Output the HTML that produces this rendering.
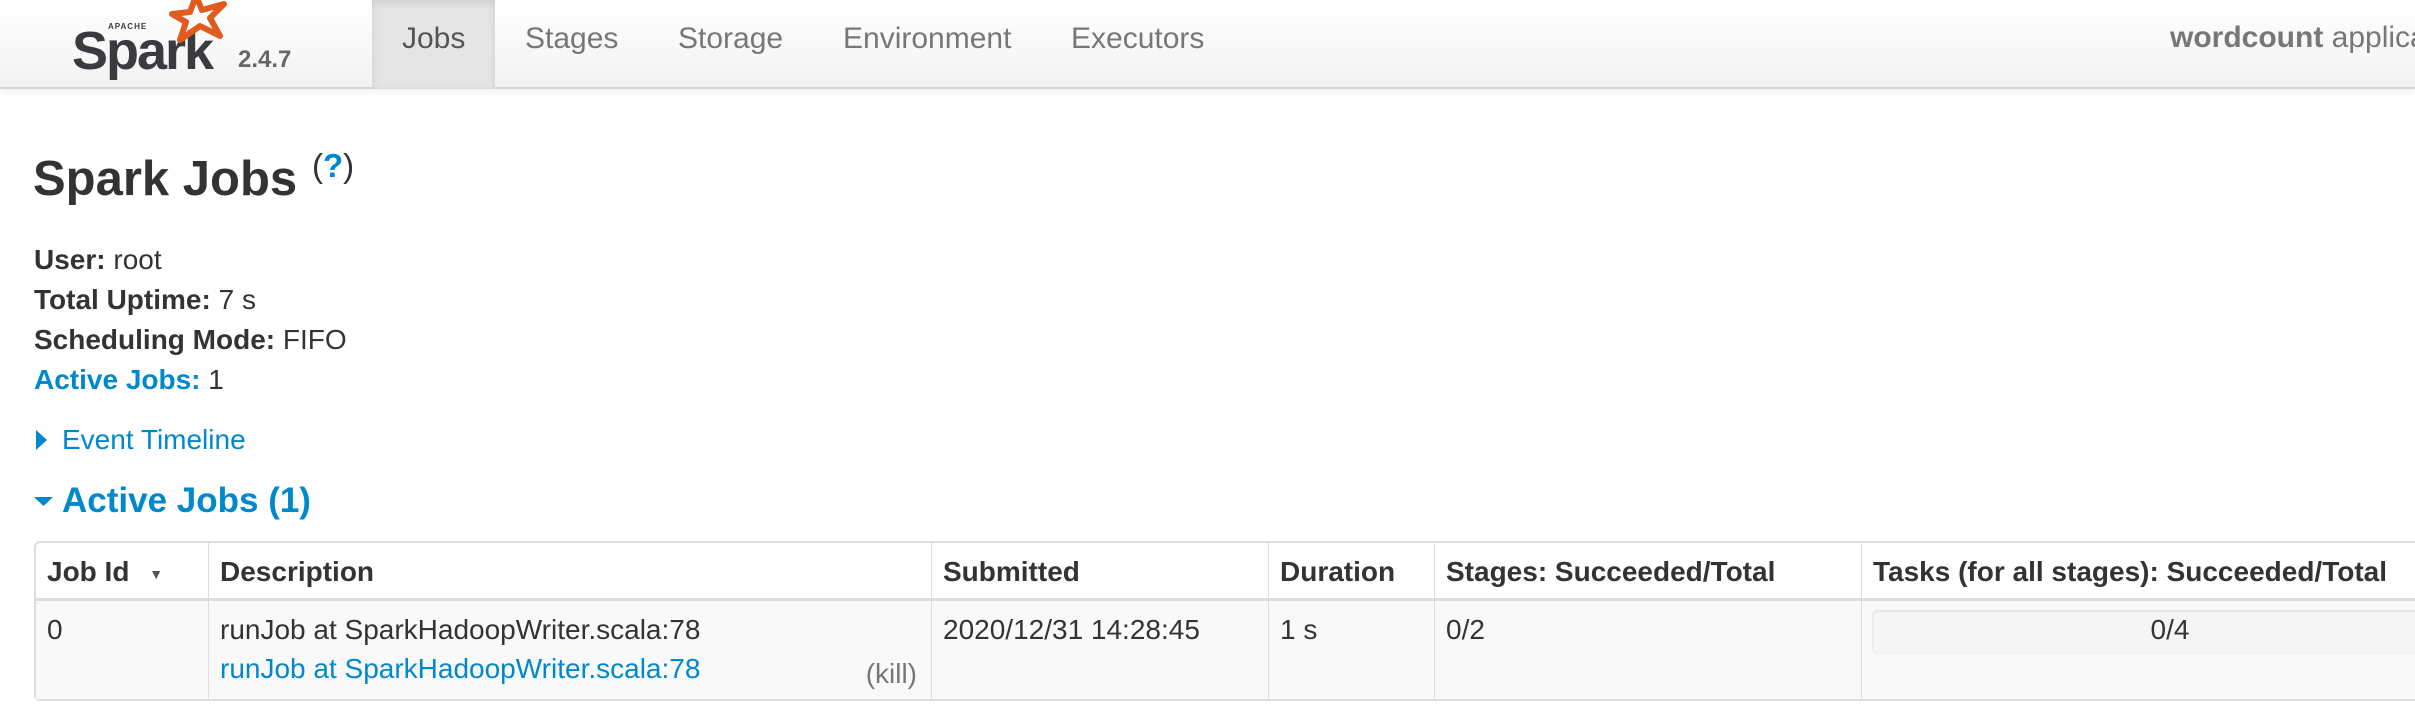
<!DOCTYPE html>
<html><head><meta charset="utf-8"><style>
*{margin:0;padding:0;box-sizing:border-box}
body{width:2415px;height:724px;overflow:hidden;background:#fff;font-family:"Liberation Sans",Arial,sans-serif;color:#333;position:relative}
.a{position:absolute;white-space:nowrap}
.nav{position:absolute;left:0;top:0;width:2415px;height:89px;background:linear-gradient(#fff,#f2f2f2);border-bottom:2px solid #d4d4d4;box-shadow:0 3px 8px rgba(0,0,0,.06)}
.nl{font-size:30px;color:#777;top:22px}
.b{font-weight:bold}
.blue{color:#0088cc}
.t{font-size:28px;line-height:30px}
table{position:absolute;left:34px;top:541px;border-collapse:separate;border-spacing:0;border:2px solid #ddd;border-radius:6px;font-size:28px;width:2420px;table-layout:fixed}
td,th{border-left:1px solid #ddd;vertical-align:top;text-align:left;padding:0 11px;white-space:nowrap}
th{height:58px;padding-top:13px;font-weight:bold;border-bottom:3px solid #ddd}
td{background:#f9f9f9;height:98px;padding-top:13px}
tr>*:first-child{border-left:none}
</style></head><body>
<div class="nav"></div>
<div class="a" style="left:72px;top:20px;font-size:54px;font-weight:bold;color:#3c3a3e;letter-spacing:-2px">Spark</div>
<div class="a" style="left:108px;top:22px;font-size:8px;font-weight:bold;color:#3c3a3e;letter-spacing:1px">APACHE</div>
<svg class="a" style="left:166px;top:0" width="64" height="44" viewBox="0 0 64 44"><path d="M30 -4 L36 10 L58 4 L44 18 L54 36 L34 26 L14 40 L20 22 L6 14 L24 12 Z" fill="none" stroke="#e25a1c" stroke-width="6" stroke-linejoin="round"/></svg>
<div class="a b" style="left:238px;top:46px;font-size:24px;color:#666">2.4.7</div>
<div class="a" style="left:372px;top:0;width:123px;height:89px;background:#e5e5e5;box-shadow:inset 0 3px 8px rgba(0,0,0,.1)"></div>
<div class="a nl" style="left:402px;color:#555">Jobs</div>
<div class="a nl" style="left:525px">Stages</div>
<div class="a nl" style="left:678px">Storage</div>
<div class="a nl" style="left:843px">Environment</div>
<div class="a nl" style="left:1071px">Executors</div>
<div class="a" style="left:2170px;top:21px;font-size:30px;color:#777"><b>wordcount</b> application UI</div>

<div class="a b" style="left:33px;top:151px;font-size:49px">Spark Jobs</div>
<div class="a" style="left:312px;top:147px;font-size:33px">(<span class="blue b">?</span>)</div>

<div class="a t" style="left:34px;top:245px"><b>User:</b> root</div>
<div class="a t" style="left:34px;top:285px"><b>Total Uptime:</b> 7 s</div>
<div class="a t" style="left:34px;top:325px"><b>Scheduling Mode:</b> FIFO</div>
<div class="a t" style="left:34px;top:365px"><b class="blue">Active Jobs:</b> 1</div>
<svg class="a" style="left:36px;top:430px" width="12" height="20"><path d="M0 0 L11 10 L0 20Z" fill="#0088cc"/></svg>
<div class="a t blue" style="left:62px;top:425px">Event Timeline</div>
<svg class="a" style="left:34px;top:497px" width="20" height="10"><path d="M0 0 L19 0 L9.5 9Z" fill="#0088cc"/></svg>
<div class="a b blue" style="left:62px;top:481px;font-size:35px">Active Jobs (1)</div>

<table>
<tr><th style="width:172px">Job Id <span style="font-size:14px;color:#555;margin-left:12px;vertical-align:middle">&#9660;</span></th><th style="width:723px">Description</th><th style="width:337px">Submitted</th><th style="width:166px">Duration</th><th style="width:427px">Stages: Succeeded/Total</th><th>Tasks (for all stages): Succeeded/Total</th></tr>
<tr><td>0</td><td style="position:relative">runJob at SparkHadoopWriter.scala:78<br><span class="blue" style="line-height:46px">runJob at SparkHadoopWriter.scala:78</span><span style="position:absolute;right:14px;top:57px;color:#777">(kill)</span></td><td>2020/12/31 14:28:45</td><td>1 s</td><td>0/2</td><td style="padding-top:9px;padding-left:10px"><div style="height:44px;border-radius:6px;background:#f5f5f5;box-shadow:inset 0 1px 3px rgba(0,0,0,.12);width:560px;text-align:center;line-height:40px;padding-left:36px">0/4</div></td></tr>
</table>
</body></html>
